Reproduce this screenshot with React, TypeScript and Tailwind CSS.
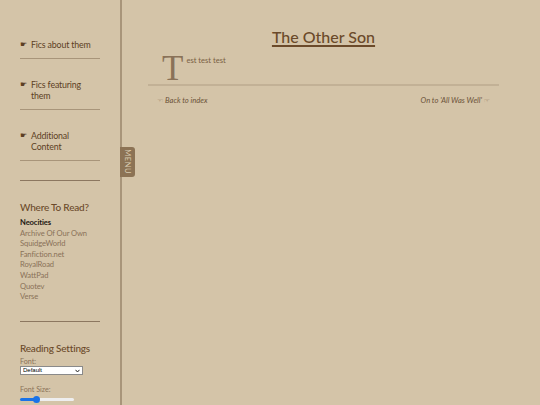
import { useState } from "react";

const navItems = ["Fics about them", "Fics featuring them", "Additional Content"];
const sites = [
  "Archive Of Our Own",
  "SquidgeWorld",
  "Fanfiction.net",
  "RoyalRoad",
  "WattPad",
  "Quotev",
  "Verse",
];

const App = () => {
  const [size, setSize] = useState(28);

  return (
    <div className="flex h-[405px] overflow-hidden bg-[#d4c4a8] font-['Lato',sans-serif] text-[#6b4a2a]">
      {/* Sidebar */}
      <aside className="relative w-[122px] shrink-0 border-r-2 border-[#a8957a] pl-5 pr-5 pt-[19px]">
        {navItems.map((item) => (
          <div key={item} className="border-b border-[#a8957a] pt-5 pb-2">
            <div className="flex items-start gap-[4px] text-[8.8px] leading-[11px] tracking-[-0.15px] text-[#5c3f24]">
              <span className="font-['DejaVu_Sans',sans-serif] text-[8px] leading-[11px]">☛</span>
              <span>{item}</span>
            </div>
          </div>
        ))}
        <div className="h-5 border-b border-[#8c7760]" />

        <h3 className="mt-[19px] text-[10px] font-medium leading-[14px] tracking-[-0.2px]">Where To Read?</h3>
        <ul className="mt-[3px] text-[7.6px] leading-[10.6px] tracking-[-0.1px] text-[#8a7258]">
          <li className="font-bold text-[#1e1812]">Neocities</li>
          {sites.map((s) => (
            <li key={s}>{s}</li>
          ))}
        </ul>
        <div className="mt-[19px] border-b border-[#8c7760]" />

        <h3 className="mt-[19px] whitespace-nowrap text-[10px] font-medium leading-[14px] tracking-[-0.2px]">Reading Settings</h3>
        <div className="mt-[2px] text-[7.2px] leading-[9px] text-[#8a7258]">Font:</div>
        <div className="relative h-[9px] w-[63px] border border-[#8a8a8a] bg-white">
          <select className="block h-full w-full appearance-none bg-transparent pl-[2px] text-[6px] leading-[7px] text-black font-['Liberation_Sans',sans-serif] outline-none">
            <option>Default</option>
          </select>
          <svg className="pointer-events-none absolute right-[2px] top-[2px]" width="5" height="4" viewBox="0 0 5 4">
            <path d="M0.5 0.8 L2.5 3 L4.5 0.8" fill="none" stroke="#222" strokeWidth="1" />
          </svg>
        </div>
        <div className="mt-[10px] text-[7.2px] leading-[9px] text-[#8a7258]">Font Size:</div>
        <input
          type="range"
          min={0}
          max={100}
          value={size}
          onChange={(e) => setSize(Number(e.target.value))}
          style={{ background: `linear-gradient(to right, #1a73e8 ${size}%, #eeeeee ${size}%)` }}
          className="mt-[4px] block h-[3px] w-[54px] appearance-none rounded-full outline-none [&::-webkit-slider-thumb]:h-[7px] [&::-webkit-slider-thumb]:w-[7px] [&::-webkit-slider-thumb]:appearance-none [&::-webkit-slider-thumb]:rounded-full [&::-webkit-slider-thumb]:bg-[#1a73e8]"
        />

        {/* Menu tab */}
        <div className="absolute left-[120px] top-[147px] flex h-[30px] w-[15px] items-center justify-center rounded-r-[3px] bg-[#8c7355]">
          <span className="rotate-90 text-[7.5px] tracking-[0.6px] text-[#d9cbb0]">MENU</span>
        </div>
      </aside>

      {/* Main */}
      <main className="flex-1 pl-[26px] pr-[41px] pt-[25px]">
        <h1 className="text-center text-[16px] font-medium leading-[24px] text-[#6b4a2a] underline decoration-[1.5px] underline-offset-[2px]">
          The Other Son
        </h1>
        <div className="h-[35px] pl-[14px] pt-[6px] text-[7.6px] leading-[10px] text-[#7a5f43]">
          <span className="float-left mr-[3px] font-['Liberation_Serif',serif] text-[35px] font-light leading-[28px] text-[#8a7258]">T</span>
          <span className="inline-block -mt-[1px]">est test test</span>
        </div>
        <div className="border-b-2 border-[#c2b196]" />
        <div className="flex justify-between px-[9px] pt-[9px] text-[7.6px] italic leading-[10px] text-[#6b5238]">
          <span>
            <span className="font-['DejaVu_Sans',sans-serif] not-italic text-[7px] text-[#a08a6e]">☜</span> Back to index
          </span>
          <span>
            On to 'All Was Well' <span className="font-['DejaVu_Sans',sans-serif] not-italic text-[7px] text-[#a08a6e]">☞</span>
          </span>
        </div>
      </main>
    </div>
  );
};

export default App;
